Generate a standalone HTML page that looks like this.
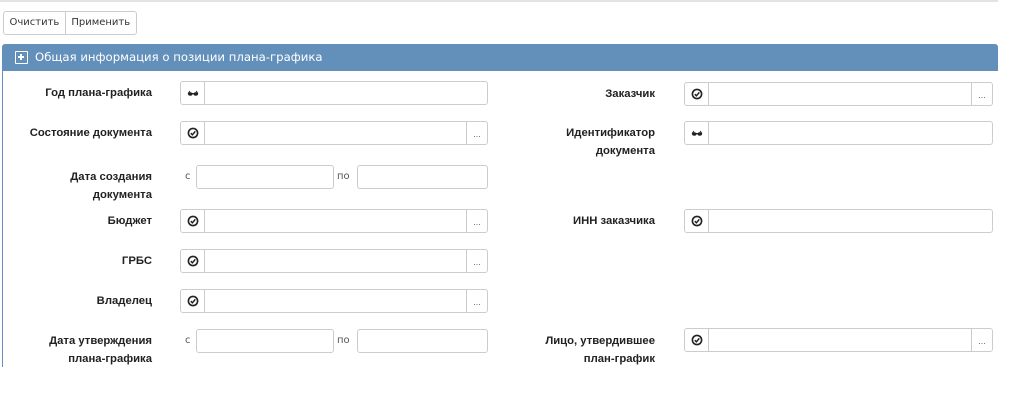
<!DOCTYPE html>
<html><head><meta charset="utf-8"><style>
body{margin:0;width:1017px;height:406px;background:#fff;position:relative;overflow:hidden;font-family:"Liberation Sans",sans-serif;}
.a{position:absolute}
.topline{left:0;top:0;width:998px;height:2px;background:#e3e3e3}
.btns{left:3px;top:11px;height:22px;border:1px solid #ccc;border-radius:3px;display:flex;color:#333;font-family:"DejaVu Sans",sans-serif;font-size:10px}
.btns span{padding:0 5.5px;line-height:22px}
.btns span+span{border-left:1px solid #ccc}
.hdr{left:2px;top:44px;width:996px;height:27px;background:#6390bb;border-radius:3px 3px 0 0;color:#fff;line-height:27px;font-family:"DejaVu Sans",sans-serif;font-size:11.7px}
.lb{left:2px;top:71px;width:1px;height:296px;background:#6390bb}
.lab{font-weight:bold;font-size:11.3px;color:#222;text-align:right;line-height:18px;width:200px}
.ig{border:1px solid #ccc;border-radius:3px;box-sizing:border-box;height:24px}
.ic{position:absolute;left:0;top:0;width:23px;height:22px;border-right:1px solid #ccc}
.ic svg{position:absolute;left:6px;top:5px}
.dd{position:absolute;right:0;top:0;width:20px;height:22px;border-left:1px solid #ccc;font-size:9px;text-align:center;line-height:24px;color:#666}
.t{font-size:10px;color:#555;font-family:"DejaVu Sans",sans-serif}
</style></head><body>
<svg width="0" height="0" style="position:absolute"><defs>
<g id="ck"><circle cx="6" cy="6" r="4.6" fill="none" stroke="#222" stroke-width="1.6"/><path d="M3.8 6.2 L5.4 7.8 L8.3 4.4" fill="none" stroke="#222" stroke-width="1.5"/></g>
<g id="gl"><path d="M1 6.5 L3 4 M11 6.5 L9 4" stroke="#222" stroke-width="1"/><ellipse cx="3.3" cy="7" rx="2.4" ry="1.7" fill="#222"/><ellipse cx="8.7" cy="7" rx="2.4" ry="1.7" fill="#222"/><path d="M5 6.5 L7 6.5" stroke="#222" stroke-width="1"/></g>
</defs></svg>
<div class="a topline"></div>
<div class="a btns"><span>Очистить</span><span>Применить</span></div>
<div class="a hdr"><span style="position:absolute;left:13px;top:7px;width:13px;height:13px;border:1.5px solid #fff;box-sizing:border-box;border-radius:1px"><span style="position:absolute;left:2px;top:4.3px;width:6px;height:1.6px;background:#fff"></span><span style="position:absolute;left:4.2px;top:2px;width:1.6px;height:6px;background:#fff"></span></span><span style="position:absolute;left:33px">Общая информация о позиции плана-графика</span></div>
<div class="a lb"></div>

<div class="a lab" style="left:-48px;top:84px">Год плана-графика</div>
<div class="a lab" style="left:-48px;top:124px">Состояние документа</div>
<div class="a lab" style="left:-48px;top:168px">Дата создания<br>документа</div>
<div class="a lab" style="left:-48px;top:212px">Бюджет</div>
<div class="a lab" style="left:-48px;top:252px">ГРБС</div>
<div class="a lab" style="left:-48px;top:292px">Владелец</div>
<div class="a lab" style="left:-48px;top:332px">Дата утверждения<br>плана-графика</div>

<div class="a ig" style="left:180px;top:81px;width:308px"><div class="ic"><svg width="12" height="12"><use href="#gl"/></svg></div></div>
<div class="a ig" style="left:180px;top:121px;width:308px"><div class="ic"><svg width="12" height="12"><use href="#ck"/></svg></div><div class="dd">...</div></div>
<div class="a t" style="left:185px;top:171px">с</div>
<div class="a ig" style="left:196px;top:165px;width:138px"></div>
<div class="a t" style="left:337px;top:171px">по</div>
<div class="a ig" style="left:357px;top:165px;width:131px"></div>
<div class="a ig" style="left:180px;top:209px;width:308px"><div class="ic"><svg width="12" height="12"><use href="#ck"/></svg></div><div class="dd">...</div></div>
<div class="a ig" style="left:180px;top:249px;width:308px"><div class="ic"><svg width="12" height="12"><use href="#ck"/></svg></div><div class="dd">...</div></div>
<div class="a ig" style="left:180px;top:289px;width:308px"><div class="ic"><svg width="12" height="12"><use href="#ck"/></svg></div><div class="dd">...</div></div>
<div class="a t" style="left:185px;top:335px">с</div>
<div class="a ig" style="left:196px;top:329px;width:138px"></div>
<div class="a t" style="left:337px;top:335px">по</div>
<div class="a ig" style="left:357px;top:329px;width:131px"></div>

<div class="a lab" style="left:455px;top:85px">Заказчик</div>
<div class="a lab" style="left:455px;top:124px">Идентификатор<br>документа</div>
<div class="a lab" style="left:455px;top:212px">ИНН заказчика</div>
<div class="a lab" style="left:455px;top:332px">Лицо, утвердившее<br>план-график</div>
<div class="a ig" style="left:684px;top:82px;width:309px"><div class="ic"><svg width="12" height="12"><use href="#ck"/></svg></div><div class="dd">...</div></div>
<div class="a ig" style="left:684px;top:121px;width:309px"><div class="ic"><svg width="12" height="12"><use href="#gl"/></svg></div></div>
<div class="a ig" style="left:684px;top:209px;width:309px"><div class="ic"><svg width="12" height="12"><use href="#ck"/></svg></div></div>
<div class="a ig" style="left:684px;top:328px;width:309px"><div class="ic"><svg width="12" height="12"><use href="#ck"/></svg></div><div class="dd">...</div></div>
</body></html>
